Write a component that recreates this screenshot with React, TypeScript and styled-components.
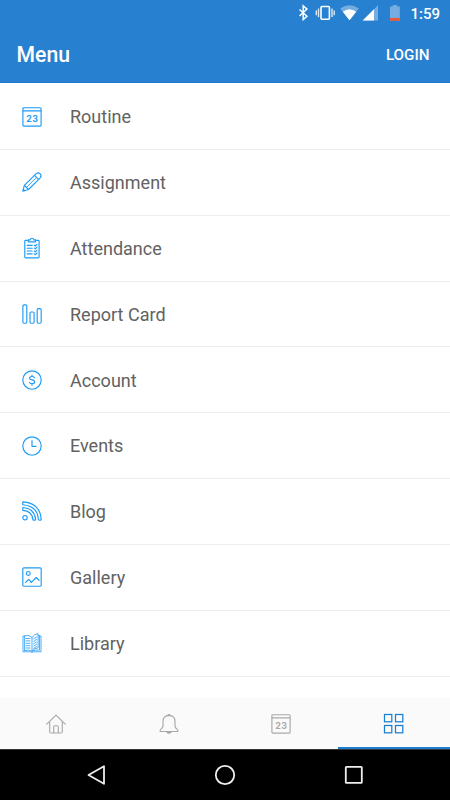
import React from "react";
import styled, { createGlobalStyle } from "styled-components";

const GlobalStyle = createGlobalStyle`
  * { box-sizing: border-box; }
  body { margin: 0; background: #fff; font-family: Roboto, sans-serif; }
`;

const Screen = styled.div`
  width: 450px;
  height: 800px;
  display: flex;
  flex-direction: column;
  overflow: hidden;
  background: #fff;
`;

const Header = styled.header`
  flex: none;
  height: 83px;
  background: #2881d0;
  border-bottom: 1px solid #1f7bce;
  color: #fff;
`;

const StatusBar = styled.div`
  height: 27px;
  display: flex;
  justify-content: flex-end;
  padding-right: 10px;
`;

const StatusIcons = styled.svg`
  width: 104px;
  height: 27px;
  display: block;
`;

const Time = styled.span`
  width: 40px;
  text-align: right;
  font-size: 15px;
  font-weight: 500;
  line-height: 28px;
  white-space: nowrap;
`;

const TitleBar = styled.div`
  height: 56px;
  display: flex;
  align-items: center;
  justify-content: space-between;
  padding: 0 20.5px 0 16.5px;
`;

const Title = styled.h1`
  margin: 0;
  font-size: 21.2px;
  font-weight: 500;
  line-height: 56px;
`;

const LoginButton = styled.button`
  border: 0;
  padding: 0;
  background: none;
  color: #fff;
  font: 500 15.2px Roboto, sans-serif;
`;

const List = styled.ul`
  flex: 1;
  min-height: 0;
  margin: 0;
  padding: 1.1px 0 0;
  list-style: none;
  overflow: hidden;
`;

const Row = styled.li`
  height: 65.83px;
  display: flex;
  align-items: center;
  gap: 27.7px;
  padding-left: 22.3px;
  border-bottom: 1px solid #ededed;
`;

const Icon = styled.svg<{ $color: string }>`
  width: 20px;
  height: 20px;
  flex: none;
  overflow: visible;
  fill: none;
  stroke: ${(p) => p.$color};
  stroke-width: 1.15;
  stroke-linecap: round;
  stroke-linejoin: round;
  text {
    font: 700 8.8px Inter, sans-serif;
    letter-spacing: 0.5px;
    fill: ${(p) => p.$color};
    stroke: none;
  }
`;

const Label = styled.span`
  padding-top: 0.6px;
  font-size: 18px;
  letter-spacing: 0.01px;
  color: #626262;
`;

const TabBar = styled.nav`
  flex: none;
  height: 51.5px;
  display: grid;
  grid-template-columns: repeat(4, 1fr);
  background: #fafafa;
`;

const Tab = styled.button<{ $active: boolean }>`
  display: flex;
  align-items: center;
  justify-content: center;
  border: 0;
  padding: 2px 0 0;
  background: none;
  border-bottom: 2px solid ${(p) => (p.$active ? "#1a7fd0" : "transparent")};
`;

const SystemBar = styled.footer`
  flex: none;
  height: 50.6px;
  display: flex;
  align-items: center;
  justify-content: center;
  gap: 109px;
  border-top: 1px solid #333;
  background: #000;
`;

const SystemIcon = styled.svg`
  width: 20px;
  height: 20px;
  overflow: visible;
  fill: none;
  stroke: #eee;
  stroke-width: 1.8;
  stroke-linejoin: round;
`;

const Calendar = () => (
  <>
    <rect x="0.9" y="0.7" width="18.2" height="18.4" rx="1" />
    <path d="M1 3.8H19" />
    <text x="4.2" y="14.6">23</text>
  </>
);

const drawings: Record<string, React.ReactNode> = {
  Routine: <Calendar />,
  Assignment: (
    <>
      <path d="M.8 19.2 2.4 13.4 14.2 1.6Q16.3-.1 18.3 1.8 20 3.8 18.2 5.8L6.5 17.5Z" />
      <path d="M2.4 13.4 6.5 17.5M12.5 3.3l4.1 4.1" />
      <path d="M4.5 15.4 14.4 5.5" strokeWidth=".9" />
      <path d="M1.4 17.3 2.7 18.6" />
    </>
  ),
  Attendance: (
    <>
      <path d="M6.5 2.4H3.6Q2.8 2.4 2.8 3.2V18.9Q2.8 19.8 3.6 19.8H16.2Q17.1 19.8 17.1 18.9V3.2Q17.1 2.4 16.2 2.4H13.4" />
      <path d="M6.4 3.8V1.8H8.1Q8.4.2 10 .2T11.8 1.8H13.5V3.8Z" />
      <path d="M5.2 7.4h5M5.2 10.2h5M5.2 13h5M5.2 15.8h5" />
      <path d="m12.3 7.2 1 .8 1.7-1.7m-2.7 3.8 1 .8 1.7-1.7m-2.7 3.8 1 .8 1.7-1.7m-2.7 3.8 1 .8 1.7-1.7" />
    </>
  ),
  "Report Card": (
    <>
      <rect x=".9" y=".8" width="3.9" height="18.4" rx="1.2" />
      <rect x="8" y="8" width="4.1" height="11.2" rx="1.2" />
      <rect x="15.2" y="4.6" width="4" height="14.6" rx="1.2" />
    </>
  ),
  Account: (
    <>
      <circle cx="10" cy="10" r="9.2" />
      <path d="M12.5 7.6Q12.1 6.5 10 6.5 7.6 6.5 7.6 8.2 7.6 9.6 10 9.9 12.6 10.3 12.6 12 12.6 13.6 10 13.6 7.8 13.6 7.4 12.3M10 5v1.5M10 13.6v1.6" />
    </>
  ),
  Events: (
    <>
      <circle cx="10" cy="10" r="9.2" />
      <path d="M10 4.6V10.3H14" />
    </>
  ),
  Blog: (
    <>
      <circle cx="3" cy="16.7" r="2.2" />
      <path d="M.8.9Q18.3 2 19.2 18.7Q17.6 19.8 16.4 18.7Q15.7 5 .8 3.7Z" />
      <path d="M.8 6.5Q12.8 7.4 13.6 18.7Q12.1 19.7 10.9 18.7Q10.2 10 .8 9.4Z" />
    </>
  ),
  Gallery: (
    <>
      <rect x=".8" y=".9" width="18.4" height="18.3" rx="1.1" />
      <circle cx="6.3" cy="6.4" r="1.9" />
      <path d="m3.6 15.4 3.1-3.1 2.5 2.8m-.2.5 5.3-5.1 2.8 2.8" />
    </>
  ),
  Library: (
    <g strokeWidth=".8">
      <path d="M2.6 3.1H1V18.8H8.6L10 19.4 11.4 18.8H19V3.1H17.5" />
      <path d="M2.6 17.5V2.7Q7.6 1.8 10 4.4V18.2Q7 16.4 2.6 17.5Z" />
      <path d="M10 4.4Q12.6.8 16.1.6V14.9Q12.1 15.2 10 18.2M16.1 2.7h1.4V17.2Q13 16.5 10 18.2" />
      <path d="M4 5.5h4M4 7.9h4M4 10.3h4M4 12.7h4M4 15h4M11.7 5.9l2.9-1.9M11.7 8.3l2.9-1.9M11.7 10.7l2.9-1.9M11.7 13.1l2.9-1.9M11.7 15.4l2.9-1.9" />
    </g>
  ),
};

const items = ["Routine", "Assignment", "Attendance", "Report Card", "Account", "Events", "Blog", "Gallery", "Library"];

const tabs = [
  {
    name: "Home",
    drawing: (
      <>
        <path d="m.7 10.2 9.3-9.1 9.3 9.1" />
        <path d="M3.7 8V17.8Q3.7 19 4.9 19H15.1Q16.3 19 16.3 17.8V8M7.7 18.8V12.9Q7.7 11.7 8.9 11.7H11.1Q12.3 11.7 12.3 12.9V18.8" />
      </>
    ),
  },
  {
    name: "Notifications",
    drawing: (
      <>
        <path d="M4 7.5Q4 1.8 10 1.4 16 1.8 16 7.5V12Q16 13.7 18 15.1 19 16 18.9 17.5H1.1Q1 16 2 15.1 4 13.7 4 12Z" />
        <path d="M8.8 1.1Q10-.1 11.2 1.1M8 18.2Q10 20 12 18.2Z" />
      </>
    ),
  },
  { name: "Calendar", drawing: <Calendar /> },
  {
    name: "Menu",
    drawing: (
      <g strokeWidth="1.25" strokeLinejoin="miter">
        <rect x=".5" y=".5" width="7.3" height="7.3" />
        <rect x="11.5" y=".5" width="7.3" height="7.3" />
        <rect x=".5" y="11.5" width="7.3" height="7.3" />
        <rect x="11.5" y="11.5" width="7.3" height="7.3" />
      </g>
    ),
  },
];

export default function App() {
  return (
    <>
      <GlobalStyle />
      <Screen>
        <Header>
          <StatusBar>
            <StatusIcons viewBox="296 0 104 27">
              <path d="m299.5 9.5 7.4 6.8-3.7 3.3V5.8l3.7 3.3-7.4 6.9" fill="none" stroke="#fff" strokeWidth="1.5" />
              <rect x="321" y="6.5" width="8.4" height="12.7" rx="1" fill="none" stroke="#fff" strokeWidth="1.6" />
              <path d="M318.5 8.5v8.5M316.3 10.5v4.7M332 8.5v8.5M334.2 10.5v4.7" stroke="#d8e8f7" strokeWidth="1.4" />
              <path d="M340.2 8.6Q349.5 2.1 358.8 8.6L349.5 20.2Z" fill="#76ade0" />
              <path d="M342.8 11.8Q349.5 6.7 356.2 11.8L349.5 20.2Z" fill="#fff" />
              <path d="M362.7 20.6 378 5.2V20.6Z" fill="#76ade0" />
              <path d="M362.7 20.6 374 9.3V20.6Z" fill="#fff" />
              <path d="M390 6.5h2.8V5h4.2v1.5h2.8v14H390Z" fill="#76ade0" />
              <path d="M390 18h9.8v2.8H390Z" fill="#ee5535" />
            </StatusIcons>
            <Time>1:59</Time>
          </StatusBar>
          <TitleBar>
            <Title>Menu</Title>
            <LoginButton>LOGIN</LoginButton>
          </TitleBar>
        </Header>
        <List>
          {items.map((name) => (
            <Row key={name}>
              <Icon viewBox="0 0 20 20" $color="#1e9bf5">{drawings[name]}</Icon>
              <Label>{name}</Label>
            </Row>
          ))}
        </List>
        <TabBar>
          {tabs.map(({ name, drawing }) => (
            <Tab key={name} aria-label={name} $active={name === "Menu"}>
              <Icon viewBox="0 0 20 20" $color={name === "Menu" ? "#1a7fd0" : "#a9a9a9"}>{drawing}</Icon>
            </Tab>
          ))}
        </TabBar>
        <SystemBar>
          <SystemIcon viewBox="0 0 20 20"><path d="M18 1.2V18.8L2.5 10Z" /></SystemIcon>
          <SystemIcon viewBox="0 0 20 20"><circle cx="10" cy="10" r="9.2" /></SystemIcon>
          <SystemIcon viewBox="0 0 20 20"><rect x="1.8" y="1.8" width="16" height="16" rx=".6" /></SystemIcon>
        </SystemBar>
      </Screen>
    </>
  );
}
